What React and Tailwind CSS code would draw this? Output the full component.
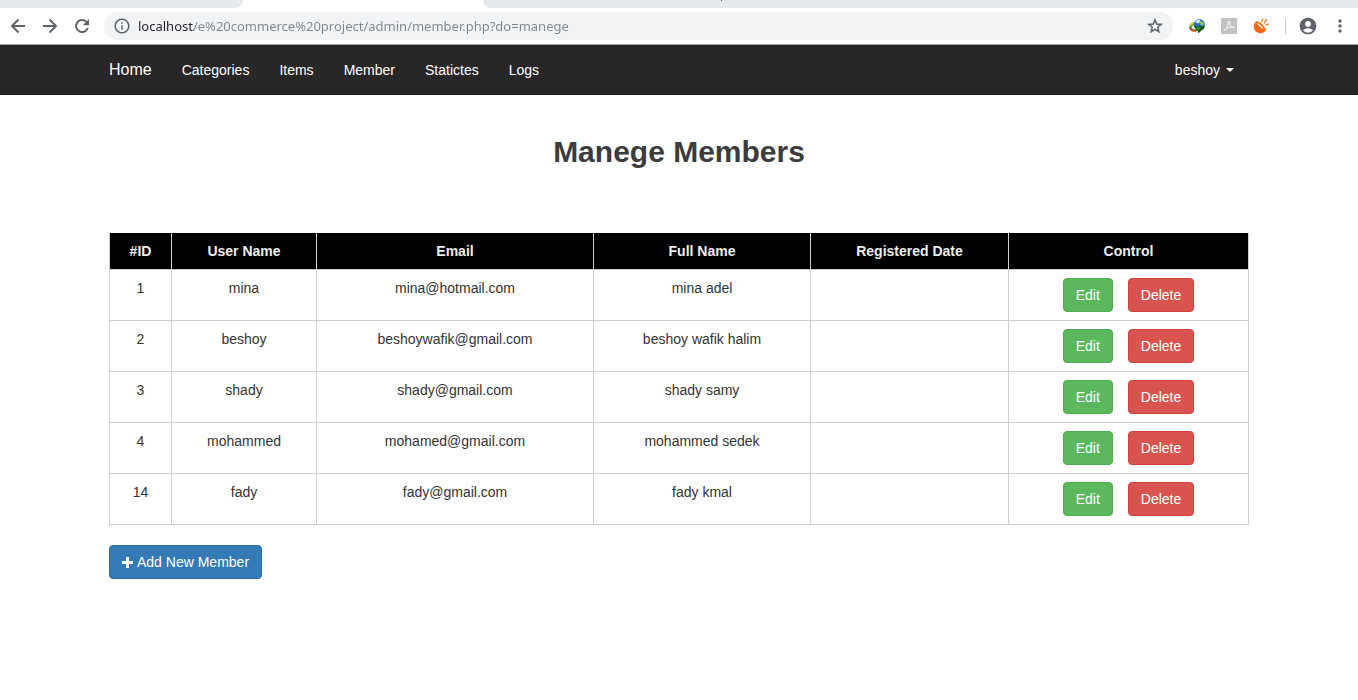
import React from "react";
import { MdAccountCircle, MdInfoOutline, MdMoreVert } from "react-icons/md";

const members = [
  { id: 1, user: "mina", email: "mina@hotmail.com", name: "mina adel", date: "" },
  { id: 2, user: "beshoy", email: "beshoywafik@gmail.com", name: "beshoy wafik halim", date: "" },
  { id: 3, user: "shady", email: "shady@gmail.com", name: "shady samy", date: "" },
  { id: 4, user: "mohammed", email: "mohamed@gmail.com", name: "mohammed sedek", date: "" },
  { id: 14, user: "fady", email: "fady@gmail.com", name: "fady kmal", date: "" },
];

const columns = [
  { label: "#ID", width: "w-[62px]" },
  { label: "User Name", width: "w-[145px]" },
  { label: "Email", width: "w-[277px]" },
  { label: "Full Name", width: "w-[217px]" },
  { label: "Registered Date", width: "w-[198px]" },
  { label: "Control", width: "w-[240px]" },
];
const links = ["Categories", "Items", "Member", "Statictes", "Logs"];

function BackIcon() {
  return (
    <svg viewBox="0 0 20 20" className="size-5" fill="none" stroke="currentColor" strokeWidth="2" aria-hidden="true">
      <path d="M17 10H4.500M10.500 3.500L4 10l6.500 6.500" />
    </svg>
  );
}

function ForwardIcon() {
  return (
    <svg viewBox="0 0 20 20" className="size-5" fill="none" stroke="currentColor" strokeWidth="2" aria-hidden="true">
      <path d="M3 10h12.500M9.500 3.500L16 10l-6.500 6.500" />
    </svg>
  );
}

function ReloadIcon() {
  return (
    <svg viewBox="0 0 20 20" className="size-5" aria-hidden="true">
      <path d="M15.800 11.800A6 6 0 1 1 14.300 5.800" fill="none" stroke="currentColor" strokeWidth="2" />
      <path d="M17 3v6.200h-6.200z" fill="currentColor" />
    </svg>
  );
}

function StarIcon() {
  return (
    <svg viewBox="0 0 18 18" className="size-[18px]" fill="none" stroke="currentColor" strokeWidth="1.500" aria-hidden="true">
      <path d="M9 2.900l1.700 4.100 4.500.4-3.400 2.900 1 4.400L9 12.400l-3.800 2.300 1-4.400-3.400-2.900 4.500-.4z" />
    </svg>
  );
}

function GlobeIcon() {
  return (
    <svg viewBox="0 0 16 16" className="size-4" aria-hidden="true">
      <ellipse cx="5.500" cy="9" rx="5.300" ry="4.500" fill="#2f9a33" />
      <path d="M0.400 9.500c.4 3 3 4.600 6 4.200l1-1.800c-3 .4-5-.8-5.400-2.800z" fill="#d2452a" />
      <path d="M0.500 7.800c.4-2 2.300-3.300 4.500-3.400l-.6 2c-1.300.2-2.200.9-2.500 2z" fill="#e3cf3a" />
      <ellipse cx="5.600" cy="9.200" rx="2.800" ry="2" fill="#e8f3dc" />
      <circle cx="10.300" cy="6.600" r="5.600" fill="#2b6cc0" />
      <path d="M6 4.500c.8-2 2.400-3 4.300-3.100l1.500 1.800-2.400 2.400z" fill="#cfe6f8" />
      <path d="M11.500 3l2.800 1 1 2.600-2 1.400-2.600-2z" fill="#86c56c" />
      <path d="M4.800 8l5 .6 5.800-1.200c.2 2-1 4-3 5l-3 2.800-1.400-2.800z" fill="#125a18" />
      <path d="M7.500 9l4 .4-2.600 2.800z" fill="#2fa83a" />
    </svg>
  );
}

function PdfIcon() {
  return (
    <svg viewBox="0 0 16 16" className="size-4" aria-hidden="true">
      <rect width="16" height="16" fill="#c3c3c3" />
      <path
        d="M3 12.600c1.800-1 4-4.600 4.500-8.600.1-1 1-1 1 0-.2 2.600 1.600 5 4.500 5.600M4.500 10.900c2-1.300 5-2 8.300-1.500"
        fill="none"
        stroke="#f3f3f3"
        strokeWidth="1.100"
        strokeLinecap="round"
      />
    </svg>
  );
}

function PlugIcon() {
  return (
    <svg viewBox="0 0 16 16" className="size-4" aria-hidden="true">
      <path d="M2 4.500c-2 3-1.500 7 1.200 9.200 3 2.300 7 1.800 9-.8.8-1.100.7-2-.3-3.300z" fill="#ff6a0f" />
      <ellipse cx="7" cy="7.500" rx="6" ry="2.400" transform="rotate(40 7 7.500)" fill="#ff6a0f" />
      <ellipse cx="7" cy="7.800" rx="4.400" ry="0.700" transform="rotate(40 7 7.800)" fill="#fff" />
      <path d="M8.800 3.600l.6-2.400M11.200 5l2.200-3.200M12.800 7l2.400-.8" stroke="#ff6a0f" strokeWidth="1.300" strokeLinecap="round" />
    </svg>
  );
}

function BrowserBar() {
  return (
    <header className="bg-white">
      <div className="flex h-2">
        <div className="w-[243px] rounded-br-lg bg-[#e6e9ec]" />
        <div className="w-60" />
        <div className="grow rounded-bl-lg bg-[#e6e9ec] pl-[238px]">
          <div className="h-px w-px bg-[#5f6368]" />
        </div>
      </div>
      <div className="flex h-[37px] items-center border-b border-[#a5a5a7] px-2 text-[#5f6368]">
        <div className="flex gap-3 pr-3">
          <button type="button" aria-label="Back"><BackIcon /></button>
          <button type="button" aria-label="Forward"><ForwardIcon /></button>
          <button type="button" aria-label="Reload"><ReloadIcon /></button>
        </div>
        <div className="flex h-7 grow items-center rounded-full bg-[#f1f3f4] px-[9px]">
          <MdInfoOutline size={18} />
          <input
            type="text"
            aria-label="Address"
            defaultValue="localhost/e%20commerce%20project/admin/member.php?do=manege"
            className="ml-[7px] min-w-0 grow bg-[linear-gradient(to_right,#202124_56px,#80868b_56px)] bg-clip-text font-['Noto_Sans',sans-serif] text-[13px] text-transparent caret-black outline-none"
          />
          <button type="button" aria-label="Bookmark"><StarIcon /></button>
        </div>
        <div className="flex items-center gap-4 pl-4">
          <button type="button" aria-label="Download manager"><GlobeIcon /></button>
          <button type="button" aria-label="PDF tools"><PdfIcon /></button>
          <button type="button" aria-label="Extension"><PlugIcon /></button>
        </div>
        <div className="ml-4 h-4 w-px bg-[#c8cacd]" />
        <button type="button" aria-label="Profile" className="ml-3"><MdAccountCircle size={20} /></button>
        <button type="button" aria-label="Menu" className="ml-3"><MdMoreVert size={20} /></button>
      </div>
    </header>
  );
}

function Navbar() {
  return (
    <nav className="border-b border-[#1b1819] bg-[#292627] text-white">
      <div className="mx-auto flex h-[49px] max-w-[1170px] items-center justify-between pr-[15px]">
        <div className="flex items-center">
          <a href="#home" className="px-[15px] text-base">Home</a>
          {links.map((link) => (
            <a key={link} href={"#" + link.toLowerCase()} className="px-[15px]">{link}</a>
          ))}
        </div>
        <button type="button" aria-haspopup="menu" className="flex items-center gap-1.5 px-[15px]">
          beshoy
          <svg viewBox="0 0 8 4" className="h-1 w-2" aria-hidden="true">
            <path d="M0 0h8L4 4z" fill="currentColor" />
          </svg>
        </button>
      </div>
    </nav>
  );
}

export default function App() {
  return (
    <div className="min-h-screen bg-white font-['Liberation_Sans',Arial,sans-serif] text-sm text-[#333]">
      <BrowserBar />
      <Navbar />
      <main className="mx-auto max-w-[1170px] px-[15px] pt-10">
        <h1 className="text-center text-[30px] leading-[34px] font-bold text-[#3c3c3c]">Manege Members</h1>
        <table className="mt-16 w-full border-collapse text-center">
          <colgroup>
            {columns.map((column) => (
              <col key={column.label} className={column.width} />
            ))}
          </colgroup>
          <thead>
            <tr className="bg-black text-[#eee]">
              {columns.map((column) => (
                <th key={column.label} scope="col" className="border border-t-0 border-[#cfcfcf] p-2">{column.label}</th>
              ))}
            </tr>
          </thead>
          <tbody>
            {members.map((member) => (
              <tr key={member.id} className="align-top">
                <td className="border border-[#cfcfcf] p-2">{member.id}</td>
                <td className="border border-[#cfcfcf] p-2">{member.user}</td>
                <td className="border border-[#cfcfcf] p-2">{member.email}</td>
                <td className="border border-[#cfcfcf] p-2">{member.name}</td>
                <td className="border border-[#cfcfcf] p-2">{member.date}</td>
                <td className="border border-[#cfcfcf] p-2">
                  <div className="flex justify-center gap-[15px]">
                    <button type="button" className="rounded border border-[#4cae4c] bg-[#5cb85c] px-3 py-1.5 text-white">Edit</button>
                    <button type="button" className="rounded border border-[#d43f3a] bg-[#d9534f] px-3 py-1.5 text-white">Delete</button>
                  </div>
                </td>
              </tr>
            ))}
          </tbody>
        </table>
        <button type="button" className="mt-5 flex items-center gap-1 rounded border border-[#2e6da4] bg-[#337ab7] px-3 py-1.5 text-white">
          <svg viewBox="0 0 11 11" className="size-[11px]" aria-hidden="true">
            <path d="M4 0h3v4h4v3H7v4H4V7H0V4h4z" fill="currentColor" />
          </svg>
          Add New Member
        </button>
      </main>
    </div>
  );
}
